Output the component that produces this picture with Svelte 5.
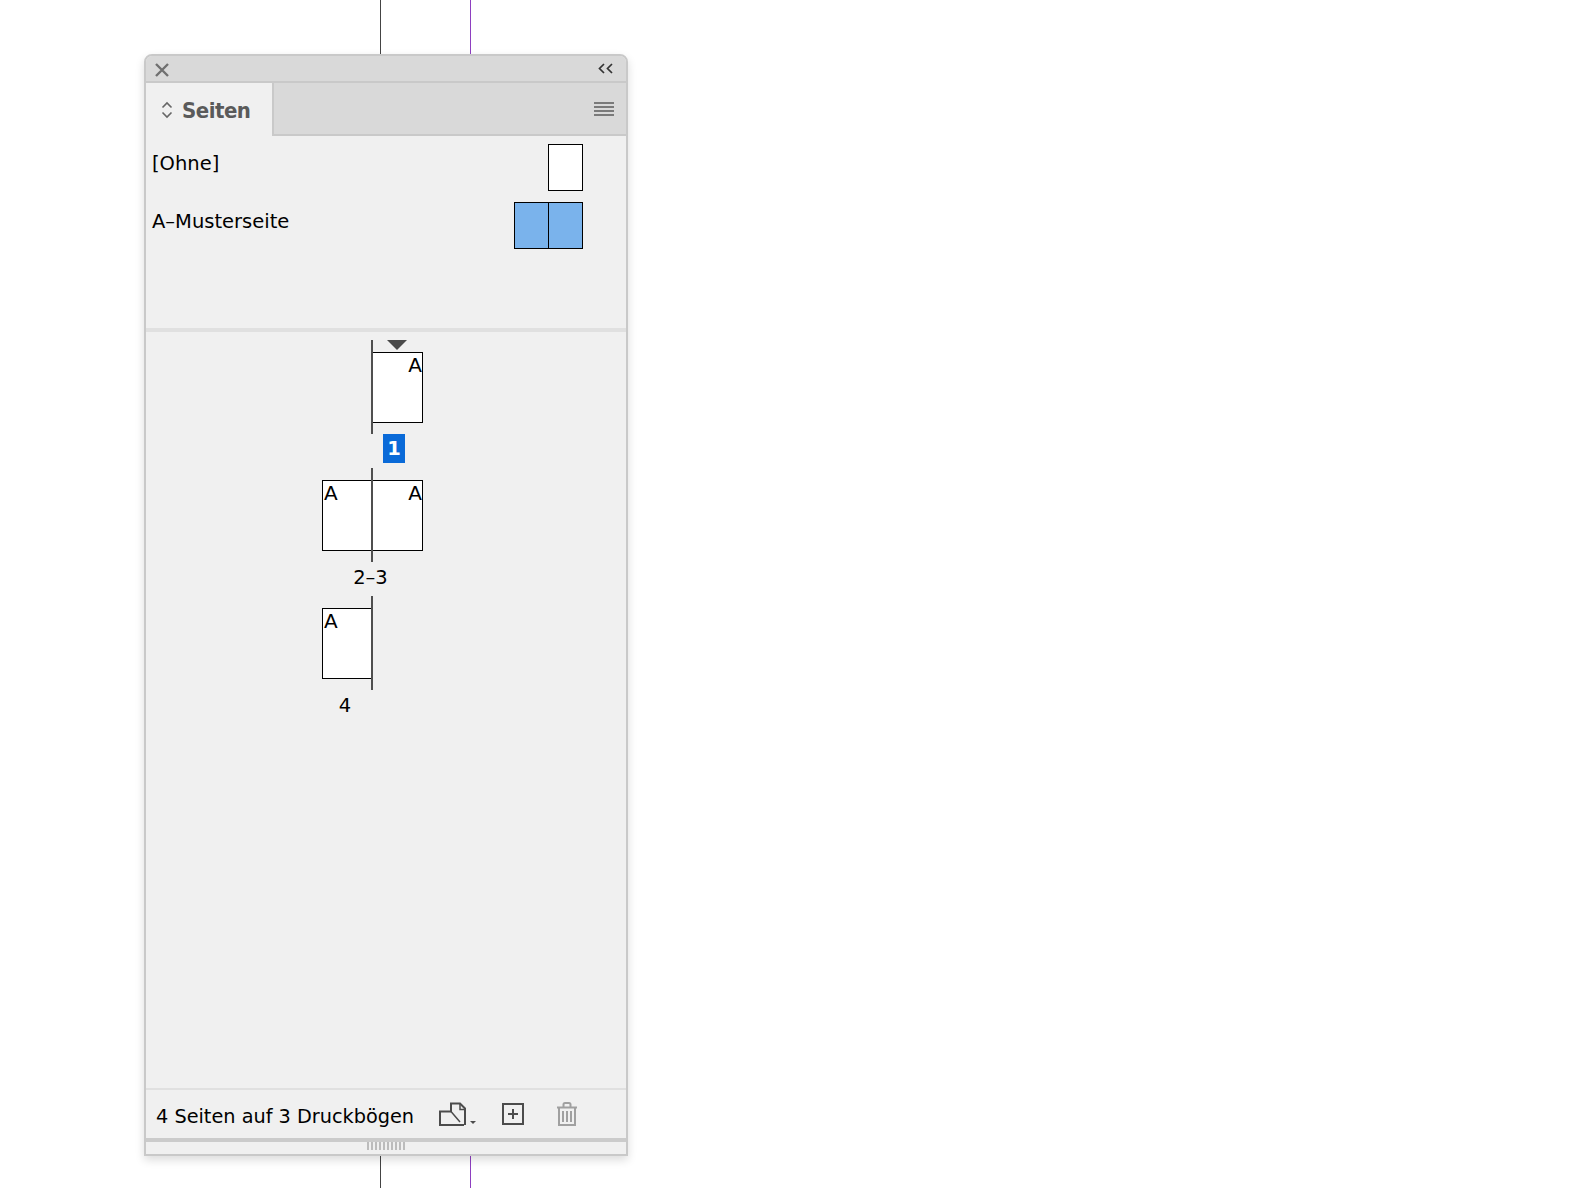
<script>
  const masters = [
    { name: '[Ohne]', pages: 1, blue: false },
    { name: 'A–Musterseite', pages: 2, blue: true }
  ];
  const spreads = [
    { label: '1', left: null, right: 'A', current: true },
    { label: '2–3', left: 'A', right: 'A', current: false },
    { label: '4', left: 'A', right: null, current: false }
  ];
</script>

<div class="canvas">
  <i class="guide dark"></i>
  <i class="guide purple"></i>

  <section class="panel">
    <header class="titlebar">
      <svg class="close" width="14" height="14" viewBox="0 0 14 14"><path d="M1 1 13 13M13 1 1 13" stroke="#707070" stroke-width="2.400" fill="none"/></svg>
      <svg class="collapse" width="15" height="11" viewBox="0 0 15 11"><path d="M6 1 1.500 5.500 6 10M14 1 9.500 5.500 14 10" stroke="#333" stroke-width="1.700" fill="none"/></svg>
    </header>

    <div class="tabrow">
      <div class="tab">
        <svg width="12" height="18" viewBox="0 0 12 18"><path d="M1.500 6.500 6 2l4.500 4.500M1.500 11.500 6 16l4.500-4.500" stroke="#666" stroke-width="1.600" fill="none"/></svg>
        <span>Seiten</span>
      </div>
      <div class="menu"><i></i><i></i><i></i><i></i></div>
    </div>

    <div class="masters">
      {#each masters as m}
        <div class="master">
          <span>{m.name}</span>
          <div class="thumb" class:blue={m.blue}>
            {#each Array(m.pages) as _}<b></b>{/each}
          </div>
        </div>
      {/each}
    </div>

    <div class="rule"></div>

    <div class="pages">
      {#each spreads as s}
        <div class="spread">
          <div class="sheet">
            {#if s.current}<i class="marker"></i>{/if}
            <i class="spine"></i>
            {#if s.left}<b class="page">A</b>{:else}<b class="ghost"></b>{/if}
            {#if s.right}<b class="page right">A</b>{/if}
          </div>
          <div class="label" class:current={s.current} class:l1={s.label === '1'} class:l4={s.label === '4'}>
            <span>{s.label}</span>
          </div>
        </div>
      {/each}
    </div>

    <footer class="footer">
      <span>4 Seiten auf 3 Druckbögen</span>
      <div class="tools">
        <svg width="37" height="24" viewBox="0 0 37 24">
          <path d="M1 9.500H12M1 8.500V23H25" stroke="#4c4c4c" stroke-width="2" fill="none"/>
          <path d="M12 10V1.500H21L26 6.500V23" stroke="#4c4c4c" stroke-width="2" fill="none"/>
          <path d="M21 2V7.500H26M12 9.500 21 20" stroke="#4c4c4c" stroke-width="1.500" fill="none"/>
          <path d="M31 19h6l-3 3z" fill="#4c4c4c"/>
        </svg>
        <svg width="22" height="22" viewBox="0 0 22 22">
          <rect x="1" y="1" width="20" height="20" fill="none" stroke="#4c4c4c" stroke-width="2"/>
          <path d="M11 6v10M6 11h10" stroke="#4c4c4c" stroke-width="2"/>
        </svg>
        <svg width="22" height="24" viewBox="0 0 22 24">
          <path d="M1 5.500h20M7.500 5V2.500a1.500 1.500 0 0 1 1.500-1.500h4a1.500 1.500 0 0 1 1.500 1.500V5M3 6V23H19V6M7 9v11M11 9v11M15 9v11" stroke="#a0a0a0" stroke-width="2" fill="none"/>
        </svg>
      </div>
    </footer>

    <div class="rule bottom"></div>
    <div class="grip">
      {#each Array(10) as _}<i></i>{/each}
    </div>
  </section>
</div>

<style>
  :global(body) {
    margin: 0;
    background: #fff;
  }
  .canvas {
    position: relative;
    height: 1188px;
    padding: 54px 0 0 144px;
    box-sizing: border-box;
    overflow: hidden;
    font-family: "DejaVu Sans", Verdana, sans-serif;
  }
  .guide {
    position: absolute;
    top: 0;
    bottom: 0;
    width: 1px;
  }
  .guide.dark { left: 380px; background: #444; }
  .guide.purple { left: 470px; background: #8e3fc0; }

  .panel {
    position: relative;
    width: 484px;
    height: 1102px;
    box-sizing: border-box;
    display: flex;
    flex-direction: column;
    background: #f0f0f0;
    border: 2px solid #c9c9c9;
    border-radius: 8px 8px 0 0;
    box-shadow: 0 4px 10px rgba(0, 0, 0, 0.14);
  }
  .titlebar {
    height: 25px;
    flex: none;
    display: flex;
    justify-content: space-between;
    align-items: center;
    padding: 0 13px 0 9px;
    background: #d9d9d9;
    border-bottom: 2px solid #c9c9c9;
    border-radius: 6px 6px 0 0;
  }
  .close { margin-top: 3px; }

  .tabrow {
    height: 51px;
    flex: none;
    display: flex;
    justify-content: space-between;
    background: #d9d9d9;
    border-bottom: 2px solid #c9c9c9;
  }
  .tab {
    width: 128px;
    height: 53px;
    box-sizing: border-box;
    padding: 0 0 0 15px;
    display: flex;
    align-items: center;
    gap: 9px;
    background: #f0f0f0;
    border-right: 2px solid #c9c9c9;
    color: #5a5a5a;
    font-family: "DejaVu Sans Condensed", "DejaVu Sans", sans-serif;
    font-stretch: condensed;
    font-size: 22px;
    font-weight: 700;
    letter-spacing: -0.5px;
  }
  .tab span { margin-top: 2px; }
  .menu {
    display: flex;
    flex-direction: column;
    gap: 2px;
    padding: 19px 12px 0 0;
  }
  .menu i {
    display: block;
    width: 20px;
    height: 2px;
    background: #7a7a7a;
  }

  .masters {
    height: 192px;
    flex: none;
    padding: 8px 43px 0 6px;
    box-sizing: border-box;
    display: flex;
    flex-direction: column;
    gap: 11px;
  }
  .master {
    display: flex;
    justify-content: space-between;
    color: #000;
    font-size: 19.500px;
    line-height: 24px;
  }
  .master span { margin-top: 8px; }
  .thumb {
    display: flex;
    height: 47px;
    box-sizing: border-box;
    border: 1px solid #000;
    background: #fff;
  }
  .thumb b {
    display: block;
    width: 33px;
  }
  .thumb b + b { border-left: 1px solid #000; }
  .thumb.blue { background: #7ab3ec; }

  .rule {
    height: 4px;
    flex: none;
    background: #e0e0e0;
  }
  .rule.bottom { background: #cbcbcb; }

  .pages {
    flex: 1;
    padding: 8px 0 0 176px;
    display: flex;
    flex-direction: column;
  }
  .spread {
    height: 128px;
  }
  .sheet {
    position: relative;
    width: 101px;
    height: 71px;
    margin-top: 12px;
    display: flex;
  }
  .spine {
    position: absolute;
    left: 49px;
    top: -12px;
    width: 2px;
    height: 94px;
    background: #4f4f4f;
    z-index: 1;
  }
  .marker {
    position: absolute;
    left: 65px;
    top: -12px;
    border-style: solid;
    border-width: 10px 10px 0;
    border-color: #4a4a4a transparent transparent;
  }
  .page {
    width: 50px;
    flex: none;
    box-sizing: border-box;
    border: 1px solid #000;
    background: #fff;
    color: #000;
    font-size: 20px;
    font-weight: 400;
    line-height: 24px;
    padding-left: 1px;
  }
  .page.right {
    width: 51px;
    text-align: right;
    padding: 0;
  }
  .ghost { width: 50px; flex: none; }
  .label {
    height: 29px;
    margin-top: 11px;
    width: 97px;
    text-align: center;
    color: #000;
    font-size: 19.500px;
    line-height: 32px;
  }
  .label.l1 { margin-left: 61px; width: 22px; line-height: 30px; }
  .label.l4 { width: 46px; }
  .label.current {
    background: #0a6ad8;
    color: #fff;
    font-weight: 700;
  }

  .footer {
    height: 50px;
    flex: none;
    box-sizing: border-box;
    border-top: 2px solid #e0e0e0;
    padding: 0 48px 0 10px;
    display: flex;
    align-items: center;
    justify-content: space-between;
    color: #000;
    font-size: 19.300px;
  }
  .footer span { margin-top: 4px; }
  .tools {
    display: flex;
    align-items: center;
    gap: 27px;
  }
  .tools svg:nth-child(2) { margin-left: -1px; }
  .tools svg:nth-child(3) { margin-left: 5px; }

  .grip {
    height: 12px;
    flex: none;
    display: flex;
    justify-content: center;
    gap: 2px;
  }
  .grip i {
    display: block;
    width: 2px;
    height: 8px;
    background: #bcbcbc;
  }
</style>
